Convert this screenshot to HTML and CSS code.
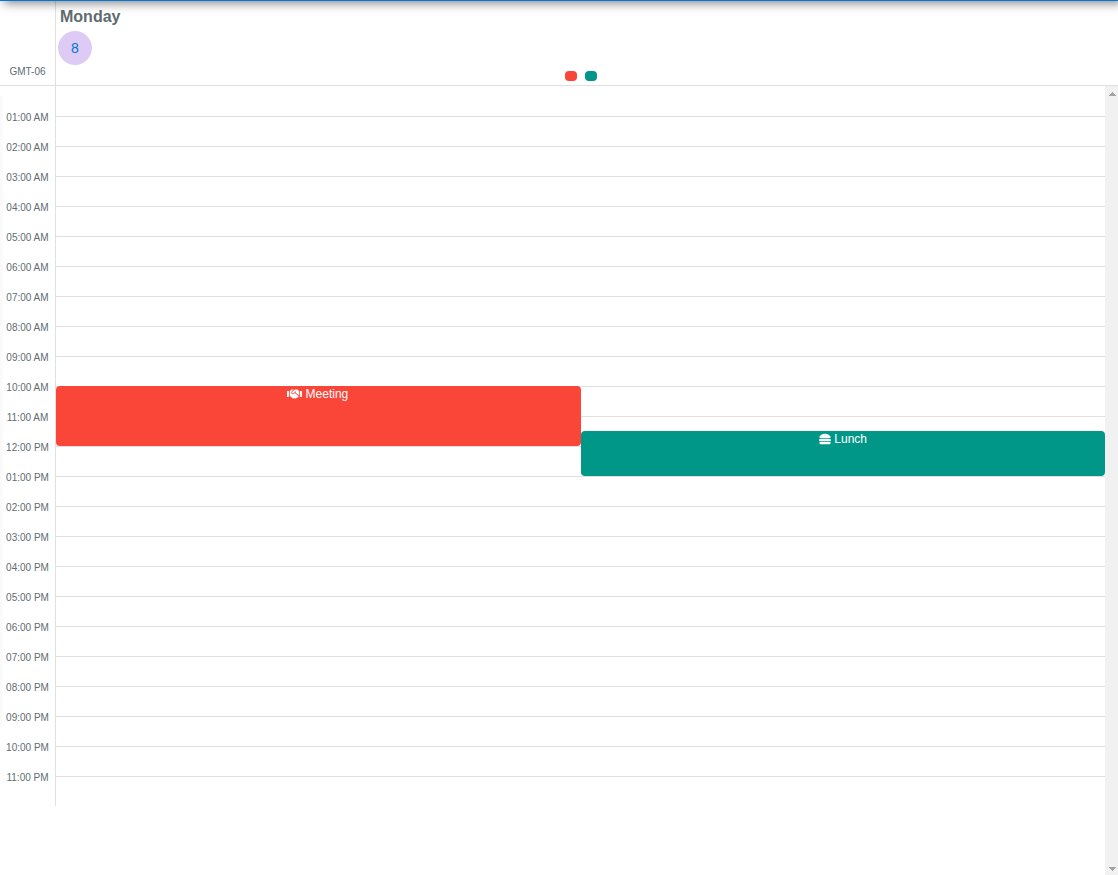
FILE: index.html
```
<!DOCTYPE html>
<html lang="en">
<head>
<meta charset="utf-8">
<title>Day view</title>
<link rel="stylesheet" href="styles.css">
</head>
<body>
<div class="topbar"></div>
<main class="calendar">
  <header class="head">
    <div class="zone">GMT-06</div>
    <div class="day">
      <div class="weekday">Monday</div>
      <div class="date">8</div>
      <div class="dots"><span class="dot red"></span><span class="dot green"></span></div>
    </div>
  </header>
  <div class="body">
    <div class="scroll">
      <div class="hours" id="hours"></div>
      <div class="grid">
        <div class="lines" id="lines"></div>
        <div class="event red meeting"><svg class="shake" viewBox="0 0 640 512"><path d="M434.7 64h-85.9c-8 0-15.7 3-21.6 8.4l-98.3 90c-.1.1-.2.3-.3.4-16.6 15.6-16.3 40.5-2.1 56 12.7 13.9 39.4 17.6 56.1 2.7.1-.1.3-.1.4-.2l79.9-73.2c6.5-5.9 16.7-5.5 22.6 1 6 6.5 5.5 16.6-1 22.6l-26.1 23.9L504 313.8c2.9 2.4 5.5 5 7.9 7.7V128l-54.6-54.6c-5.9-6-14.1-9.4-22.6-9.4zM544 128.2v223.9c0 17.7 14.3 32 32 32h64V128.2h-96zm48 223.9c-8.8 0-16-7.2-16-16s7.2-16 16-16 16 7.2 16 16-7.2 16-16 16zM0 384h64c17.7 0 32-14.3 32-32V128.2H0V384zm48-63.9c8.8 0 16 7.2 16 16s-7.2 16-16 16-16-7.2-16-16c0-8.9 7.2-16 16-16zm435.9 18.6L334.6 217.5l-30 27.5c-29.7 27.1-75.2 24.5-101.7-4.4-26.9-29.4-24.8-74.9 4.4-101.7L289.1 64h-83.8c-8.5 0-16.6 3.4-22.6 9.4L128 128v223.9h18.3l90.5 81.9c27.4 22.3 67.7 18.1 90-9.3l.2-.2 17.9 15.5c15.9 13 39.4 10.5 52.3-5.4l31.4-38.6 5.4 4.4c13.7 11.1 33.9 9.1 45-4.7l9.5-11.7c11.2-13.8 9.1-33.9-4.6-45.1z"/></svg> Meeting</div>
        <div class="event green lunch"><svg class="burger" viewBox="0 0 512 512"><path fill-rule="evenodd" d="M464 256H48a48 48 0 0 0 0 96h416a48 48 0 0 0 0-96zm16 128H32a16 16 0 0 0-16 16v16a64 64 0 0 0 64 64h352a64 64 0 0 0 64-64v-16a16 16 0 0 0-16-16zM58.64 224h394.72c34.57 0 54.62-43.9 34.82-75.88C448 83.2 359.55 32.1 256 32c-103.54.1-192 51.1-232.18 116.11C4 180.09 24.07 224 58.64 224zM384 112a16 16 0 1 1-16 16 16 16 0 0 1 16-16zM256 80a16 16 0 1 1-16 16 16 16 0 0 1 16-16zM128 112a16 16 0 1 1-16 16 16 16 0 0 1 16-16z"/></svg> Lunch</div>
      </div>
    </div>
    <div class="scrollbar">
      <svg viewBox="0 0 7 4" shape-rendering="crispEdges"><path d="M3 0h1v1h1v1h1v1h1v1H0V3h1V2h1V1h1z"/></svg>
      <svg viewBox="0 0 7 4" shape-rendering="crispEdges"><path d="M0 0h7v1H6v1H5v1H4v1H3V3H2V2H1V1H0z"/></svg>
    </div>
  </div>
</main>
<script src="hours.js"></script>
</body>
</html>
```
FILE: styles.css
```
* { box-sizing: border-box; }
body {
  margin: 0;
  height: 875px;
  display: flow-root;
  overflow: hidden;
  background: #fff;
  color: #606c71;
  font-family: "Liberation Sans", Arial, sans-serif;
}
.topbar {
  height: 41px;
  margin-top: -40px;
  background: #0275d8;
  box-shadow: 4px 2px 10px rgba(0, 0, 0, .5);
  position: relative;
  z-index: 2;
}
.calendar { height: 874px; display: flex; flex-direction: column; }
.head {
  height: 85px;
  flex: none;
  display: flex;
  border-bottom: 1px solid #e0e0e0;
}
.zone {
  width: 56px;
  border-right: 1px solid #e0e0e0;
  font-size: 10px;
  line-height: 12px;
  text-align: center;
  padding-top: 65px;
}
.day { flex: 1; display: flex; flex-direction: column; }
.weekday {
  font-size: 16px;
  font-weight: bold;
  line-height: 20px;
  padding: 6px 0 0 4px;
}
.date {
  width: 34px;
  height: 34px;
  margin: 4px 0 0 2px;
  border-radius: 50%;
  background: #decbf5;
  color: #0275d8;
  font-size: 14px;
  line-height: 34px;
  text-align: center;
}
.dots { display: flex; justify-content: center; gap: 8px; margin: 6px 12px 0 0; }
.dot { width: 12px; height: 10px; border-radius: 4px; }
.red { background: #fa4539; }
.green { background: #019788; }
.body { flex: 1; display: flex; min-height: 0; }
.scroll { flex: 1; display: flex; height: 720px; }
.hours {
  width: 56px;
  border-right: 1px solid #e0e0e0;
  padding-top: 17px;
  font-size: 10px;
  line-height: 30px;
  text-align: center;
  background: linear-gradient(to right, #f9f9f9, #fff) 0 10px / 5px 630px no-repeat;
}
.hour { height: 30px; }
.grid {
  flex: 1;
  display: grid;
  grid-template-columns: 525px 524px;
  grid-template-rows: repeat(48, 15px);
}
.lines { grid-area: 1 / 1 / 49 / 3; padding-top: 30px; }
.line { height: 30px; border-top: 1px solid #e0e0e0; }
.event {
  border-radius: 4px;
  color: #fff;
  font-size: 12px;
  line-height: 17px;
  text-align: center;
}
.meeting { grid-area: 21 / 1 / 25 / 2; padding-right: 1.5px; }
.lunch { grid-area: 24 / 2 / 27 / 3; }
.event svg { height: 12px; fill: #fff; vertical-align: -1.5px; }
.shake { width: 15px; }
.burger { width: 12px; }
.scrollbar {
  width: 13px;
  background: #f1f1f1;
  display: flex;
  flex-direction: column;
  justify-content: space-between;
  align-items: center;
  padding: 6px 0 4px 2px;
}
.scrollbar svg { width: 7px; height: 4px; fill: #a3a3a3; }
```
FILE: hours.js
```
const hours = document.getElementById('hours');
const lines = document.getElementById('lines');
for (let h = 1; h < 24; h++) {
  const label = document.createElement('div');
  label.className = 'hour';
  label.textContent = String(h > 12 ? h - 12 : h).padStart(2, '0') + ':00 ' + (h < 12 ? 'AM' : 'PM');
  hours.append(label);
  const line = document.createElement('div');
  line.className = 'line';
  lines.append(line);
}
```
